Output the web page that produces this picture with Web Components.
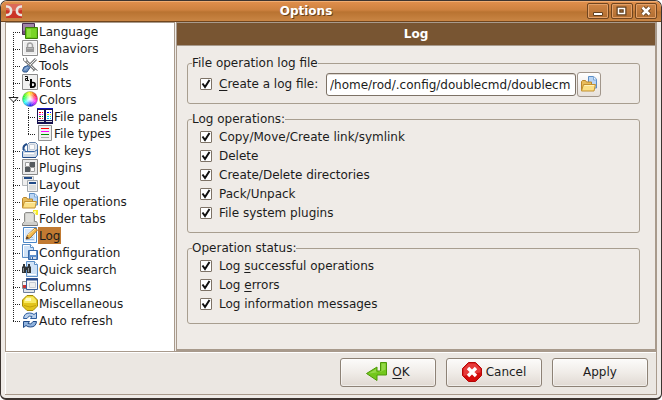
<!DOCTYPE html>
<html lang="en">
<head>
<meta charset="utf-8">
<title>Options</title>
<style>
  html { background: #fff; }
  body { margin: 0; font: 12px/15px "DejaVu Sans", sans-serif; color: #1c1c1c; }
  u { text-decoration: underline; text-underline-offset: 2px; text-decoration-skip-ink: none; }
</style>
</head>
<body>
<options-window caption="Options">
  <nav-tree slot="nav">
    <nav-item icon="language">Language</nav-item>
    <nav-item icon="behaviors">Behaviors</nav-item>
    <nav-item icon="tools">Tools</nav-item>
    <nav-item icon="fonts">Fonts</nav-item>
    <nav-item icon="colors" expanded>Colors</nav-item>
    <nav-item icon="panels" child>File panels</nav-item>
    <nav-item icon="types" child last>File types</nav-item>
    <nav-item icon="hotkeys">Hot keys</nav-item>
    <nav-item icon="plugins">Plugins</nav-item>
    <nav-item icon="layout">Layout</nav-item>
    <nav-item icon="folder">File operations</nav-item>
    <nav-item icon="tabs">Folder tabs</nav-item>
    <nav-item icon="log" selected>Log</nav-item>
    <nav-item icon="config">Configuration</nav-item>
    <nav-item icon="search">Quick search</nav-item>
    <nav-item icon="columns">Columns</nav-item>
    <nav-item icon="misc">Miscellaneous</nav-item>
    <nav-item icon="refresh">Auto refresh</nav-item>
  </nav-tree>
  <option-page heading="Log">
    <group-box legend="File operation log file">
      <file-row>
        <check-option><u>C</u>reate a log file:</check-option>
      </file-row>
    </group-box>
    <group-box legend="Log operations:" list>
      <check-option>Copy/Move/Create link/symlink</check-option>
      <check-option>Delete</check-option>
      <check-option>Create/Delete directories</check-option>
      <check-option>Pack/Unpack</check-option>
      <check-option>File system plugins</check-option>
    </group-box>
    <group-box legend="Operation status:" list>
      <check-option>Log <u>s</u>uccessful operations</check-option>
      <check-option>Log <u>e</u>rrors</check-option>
      <check-option>Log information messages</check-option>
    </group-box>
  </option-page>
  <push-button slot="actions" icon="ok"><span><u>O</u>K</span></push-button>
  <push-button slot="actions" icon="cancel">Cancel</push-button>
  <push-button slot="actions">Apply</push-button>
</options-window>

<script>
const wheel = () => {
  let out = "";
  for (let a = 0; a < 360; a += 15) {
    const p = d => { const r = (d * Math.PI) / 180; return `${(8 + 7.5 * Math.cos(r)).toFixed(2)} ${(8 - 7.5 * Math.sin(r)).toFixed(2)}`; };
    out += `<path d="M8 8L${p(a - 1)}A7.5 7.5 0 0 0 ${p(a + 16)}z" fill="hsl(${(a + 330) % 360} 100% 55%)"/>`;
  }
  return `<defs><radialGradient id="w"><stop offset="0" stop-color="#fff"/><stop offset=".9" stop-color="#fff" stop-opacity="0"/></radialGradient></defs>${out}<circle cx="8" cy="8" r="7.5" fill="url(#w)"/><circle cx="8" cy="8" r="7.5" fill="none" stroke="#8a8a8a" stroke-opacity=".6" stroke-width=".8"/>`;
};
const ICONS = {
  app: `<rect width="16" height="14" y="1" fill="#cb3325"/><path d="M0 1h16v6Q8 9 0 7z" fill="#dd6a58"/><g fill="none" stroke="#e9e4de" stroke-width="2.600"><path d="M0 3.500h1c5.500 0 5.500 8.500 0 8.500H0M16 3.500h-1c-5.500 0-5.500 8.500 0 8.500h1"/></g>`,
  language: `<path d="M.5.500h12v11H.5z" fill="#75527f" stroke="#4a2f54"/><path d="M1 1h11v4L1 8z" fill="#a184a8"/><path d="M3.500 4.500h12v11h-12z" fill="#6cc91c" stroke="#3c7c0a"/><path d="M5 6h4v8H5z" fill="#8fe03f"/><path d="M9 6h5v8H9z" fill="#79d426"/>`,
  behaviors: `<path d="M.5.500h15v15H.5z" fill="#ededed" stroke="#8d8d8d"/><path d="M1.500 1.500h13v13h-13z" fill="none" stroke="#fafafa"/><path d="M5.500 7V5.500a2.500 2.500 0 0 1 5 0V7" fill="none" stroke="#a2a2a2" stroke-width="1.500"/><path d="M4 7h8v5H4z" fill="#989898"/><path d="M5 8h6v1H5z" fill="#b4b4b4"/>`,
  tools: `<path d="M4 4l9 9" stroke="#7b7b7b" stroke-width="3"/><path d="M4 4l9 9" stroke="#e2e2e2" stroke-width="1"/><path d="M1.500 1v2.500l2 1.500h1.500V3L4 .5M11 14.500l1-1.500 2-1 1.500 2" fill="none" stroke="#808080"/><path d="M14 2L8 8" stroke="#808080" stroke-width="3"/><path d="M14 2L8 8" stroke="#f0f0f0"/><path d="M6 8.500L8 10.500 5 15H1.500L.500 13.500 2 10z" fill="#6a90c2" stroke="#2b5286"/><path d="M2.500 13l3-3" stroke="#a9c5e6"/>`,
  fonts: `<path d="M.5.500h15v15H.5z" fill="#f0f0f0" stroke="#8a8a8a"/><path d="M3 2.500h2.500V7M5.500 4.500H3.500v2h2M6 6.500h1" fill="none" stroke="#111"/><path d="M8 5h2v9H8z"/><circle cx="10.800" cy="10.800" r="2.300" fill="none" stroke="#000" stroke-width="1.700"/>`,
  colors: wheel(),
  panels: `<path d="M0 0h16v16H0z" fill="#17124f"/><path d="M1 2h6v10H1zM9 2h6v10H9z" fill="#fff"/><path d="M0 .5h16" stroke="#1212ba"/><path d="M2 4.500h2M5 4.500h1" stroke="#f00"/><path d="M2 6.500h2M5 6.500h1" stroke="#f0f"/><path d="M2 8.500h2M5 8.500h1" stroke="#080"/><path d="M2 10.500h2M5 10.500h1" stroke="#f33"/><path d="M10 4.500h2M13 4.500h1" stroke="#00f"/><path d="M10 6.500h2M13 6.500h1" stroke="#dd0"/><path d="M10 8.500h2M13 8.500h1" stroke="#0dd"/><path d="M10 10.500h2M13 10.500h1" stroke="#0cf"/><path d="M1 13.500h6M9 13.500h6" stroke="#ddd"/>`,
  types: `<path d="M1.500.500h13v15h-13z" fill="#f1f1f1" stroke="#929292"/><path d="M4 3.500h8" stroke="#f00"/><path d="M4 6.500h8" stroke="#f0f"/><path d="M4 9.500h8" stroke="#008c00"/><path d="M4 12.500h8" stroke="#aaa"/>`,
  hotkeys: `<path d="M5.500 2.500l2-2h6l2 2v7l-2 2h-8z" fill="#e4e8ed" stroke="#5f7fa8"/><path d="M7.500 2.500h5v5h-5z" fill="#fafafa" stroke="#c3ccd8"/><path d="M1.500 8V5.500Q2 3 5 2" fill="none" stroke="#204a87" stroke-width="2"/><path d="M.5 9.500L3 7.500v2h9.500l3-2v5.500l-2 2.500H.500z" fill="#d4dce6" stroke="#3465a4"/><path d="M2 11.500h10" stroke="#fff"/><path d="M1 15.500h13" stroke="#204a87"/>`,
  plugins: `<path d="M.5.500h15v15H.5z" fill="#ebebeb" stroke="#8a8a8a"/><path d="M3.500 3.500h4v4h-4zM8.500 8.500h4v4h-4z" fill="#fafafa" stroke="#9c9c9c"/><path d="M8 3h5v5H8zM3 8h5v5H3z" fill="#555a5e"/>`,
  layout: `<path d="M.5.500h11v9H.5z" fill="#eee" stroke="#b4b8bb"/><path d="M2 2h8" stroke="#204a87" stroke-width="2"/><path d="M5.500 4.500h10v11h-10z" fill="#f2f2f2" stroke="#a2a8ad"/><path d="M7 7h7" stroke="#204a87" stroke-width="2"/><path d="M7 9h7v5H7z" fill="#dcdedd"/>`,
  folder: `<path d="M7.500.500h5l3 2.500v9h-8z" fill="#b9d5f5" stroke="#5b8ec6"/><path d="M12.500.500V4h3" fill="#eef6ff" stroke="#7ea9d6"/><path d="M.5 14.500v-9l1-1h3l1 1.500h5v3" fill="#e9bd5b" stroke="#b9862b"/><path d="M2.500 8.500h12l-1.500 6.500H.500z" fill="#fbe086" stroke="#c2902f"/><path d="M3.500 9.500h9.500" stroke="#fff3bd"/>`,
  tabs: `<path d="M2.500 3.500L4 2.500h7l1.500 2v7h2l1 2v2H.500v-2l2-2z" fill="#cfcfcb" stroke="#8e8e8a"/><path d="M4 4h7v8H4z" fill="#dfdfdb"/><path d="M.5 15.500h15" stroke="#777"/><path d="M11 0h5v5h-2l-1-2-2-1z" fill="#f4e92c"/><path d="M12 1h2v2h-2z" fill="#fffb9a"/>`,
  log: `<path d="M1.500.500h13v15h-13z" fill="#d9e9fb" stroke="#4a86c7"/><path d="M2.500 1.500h11v13h-11z" fill="none" stroke="#fff"/><path d="M4 12.500h8M4 10.500h7" stroke="#99bfe8"/><path d="M4 12l1.500-4L13 1l2.500 2L8 11z" fill="#f3b94e" stroke="#ab7225"/><path d="M6 8l7-6" stroke="#ffe7a0"/><path d="M4 12l.8-2.500L7 11z" fill="#46342a"/>`,
  config: `<path d="M.5.500h8l3 3v10H.5z" fill="#cfe2f7" stroke="#5b8ec6"/><path d="M8.500.500v3h3" fill="#fff" stroke="#5b8ec6"/><path d="M1.500 12.500v-11h6" fill="none" stroke="#fff"/><path d="M6.500 6.500h9v9h-9z" fill="#5f91cc" stroke="#3465a4"/><path d="M8 7h6v4H8z" fill="#fff"/><path d="M9 13h5v2H9z" fill="#d3dde9"/><path d="M10 13h1v2h-1z" fill="#3465a4"/>`,
  search: `<path d="M4.500.500h8l3 3v12h-11z" fill="#cfe2f7" stroke="#5b8ec6"/><path d="M12.500.500v3h3" fill="#fff" stroke="#5b8ec6"/><path d="M6 13.500h8" stroke="#fff"/><path d="M1 3h2v2H1zM6 3h2v2H6zM0 6l1-1h2l1 1h1l1-1h2l1 1v6H5V9H4v3H0z" fill="#303437"/><path d="M1.500 7v4M6.500 7v4" stroke="#8c9194"/>`,
  columns: `<path d="M.5 3.500h5v7h-5z" fill="#f2f2f2" stroke="#8b8b8b"/><path d="M1 7h3v3H1z" fill="#cd3333"/><path d="M1.500 10.500h11v4h-11z" fill="#dfe3ea" stroke="#6c7f9d"/><path d="M4.500.500h11v11h-11z" fill="#f7f7f7" stroke="#3a5e9c"/><path d="M4 1.500h12" stroke="#26488a" stroke-width="2"/><path d="M7.500 4.500h6v5h-6z" fill="#eee" stroke="#c7ccd5"/>`,
  misc: `<path d="M5 .5h6L15.500 5v6L11 15.500H5L.500 11V5z" fill="#e3c51d" stroke="#a38a06"/><path d="M5 1.500h6l3 3.500v3H2V5z" fill="#f8ea62"/><path d="M4 3h5v3H3z" fill="#fffbc2"/><path d="M2 10.500q6 3 12 0" fill="none" stroke="#c3a10b"/>`,
  refresh: `<path d="M1.500 6.500Q2 1 7.500 1q3 0 4.500 1.500L14.500.500v6h-6L10 4.500Q7 2.500 5 6.500z" fill="#b9d0ec" stroke="#2d5c9e"/><path d="M14.500 9.500Q14 15 8.500 15q-3 0-4.500-1.500L1.500 15.500v-6h6L6 11.500q3 2 5-2z" fill="#8fb2dd" stroke="#204a87"/>`,
  ok: `<path d="M14.500.500h6v12.500h-9.500v5.500L.500 11.500 11 5v4h3.500z" fill="#73c71c" stroke="#4c9808"/><path d="M15.500 1.500h4v6q-6 3-17 4L10 7v3h5.500z" fill="#a0dd58" opacity=".75"/>`,
  cancel: `<path d="M6.500.500h7l6 6v7l-6 6h-7l-6-6v-7z" fill="#d40c0c" stroke="#b30707"/><path d="M6.500 1.500h7L18.500 6.500v4Q10 11 1.500 14V6.500z" fill="#e55" opacity=".65"/><path d="M6 6l8 8M14 6l-8 8" stroke="#fff" stroke-width="3.400"/>`
};
const icon = (name, w = 16, h = 16) => `<svg aria-hidden="true" width="${w}" height="${h}" viewBox="0 0 ${w} ${h}">${ICONS[name]}</svg>`;

class Base extends HTMLElement {
  connectedCallback() {
    if (this.shadowRoot) return;
    this.attachShadow({ mode: "open" }).innerHTML =
      `<style>*{box-sizing:border-box} svg{display:block;flex:none}</style>` + this.view();
  }
}

customElements.define("options-window", class extends Base {
  view() {
    return `<style>
      :host { display: flex; flex-direction: column; box-sizing: border-box; min-height: 100vh;
        border: 1px solid #3c3430; border-bottom-width: 2px; border-radius: 7px 7px 6px 6px;
        background: #efebe7; overflow: hidden; }
      header { display: flex; align-items: center; height: 21px; padding: 0 4px 0 5px;
        border-bottom: 1px solid #70451d;
        background: linear-gradient(#f0ad73 0 1px, #df8e4b 1px, #cd813f 45%, #b97331 55%, #c98544); }
      h1 { flex: 1; margin: 0; padding-left: 3px; text-align: center; font-size: 12px; line-height: 18px; color: #fff; text-shadow: 1px 1px #6b421c; }
      .controls { display: flex; gap: 2px; }
      .controls button { width: 22px; height: 16px; padding: 0; display: grid; place-items: center;
        border: 1px solid #70451f; border-radius: 2px; box-shadow: inset 0 0 0 1px #e2a068;
        background: linear-gradient(#cf8545, #b06d30); }
      main { display: flex; flex: 1; margin: 0 4px; border-bottom: 1px solid #a89a8c; }
      ::slotted([slot=nav]) { flex: 0 0 170px; }
      .page { display: flex; flex: 1; margin-left: 1px; min-width: 0; }
      footer { display: flex; justify-content: flex-end; gap: 10px; padding: 6px 8px 7px;
        margin: 0 4px 3px; border: 1px solid #a89a8c; border-width: 0 1px 1px 0;
        box-shadow: inset 1px 1px #fff; background: #ebe7e2; }
    </style>
    <header>${icon("app")}<h1>${this.getAttribute("caption")}</h1>
      <div class="controls">
        <button aria-label="Minimize"><svg width="12" height="12"><path d="M1.500 7.500h9v3h-9z" fill="#fff" stroke="#63401f"/></svg></button>
        <button aria-label="Maximize"><svg width="12" height="12"><path d="M2.500 3.500h6v5h-6z" fill="none" stroke="#63401f" stroke-width="4"/><path d="M2.500 3.500h6v5h-6z" fill="none" stroke="#fff" stroke-width="1.500"/></svg></button>
        <button aria-label="Close"><svg width="12" height="12"><path d="M2.500 2.500l7 7M9.500 2.500l-7 7" stroke="#63401f" stroke-width="4.500"/><path d="M2.500 2.500l7 7M9.500 2.500l-7 7" stroke="#fff" stroke-width="2.500"/></svg></button>
      </div></header>
    <main><slot name="nav"></slot><div class="page"><slot></slot></div></main>
    <footer><slot name="actions"></slot></footer>`;
  }
});

customElements.define("nav-tree", class extends Base {
  view() {
    return `<style>
      :host { display: block; box-sizing: border-box; background: #fff; border: 1px solid #a89a8c; border-bottom: 0; }
      div { background: repeating-linear-gradient(#222 0 1px, transparent 1px 2px) 7px 9px / 1px calc(100% - 17px) no-repeat; }
    </style><div role="tree" aria-label="Option pages"><slot></slot></div>`;
  }
});

customElements.define("nav-item", class extends Base {
  view() {
    this.setAttribute("role", "treeitem");
    const toggle = this.hasAttribute("expanded")
      ? `<svg width="11" height="7"><path d="M1 1.500h9L5.500 6z" fill="#fff" stroke="#222"/></svg>` : "";
    return `<style>
      :host { display: flex; align-items: flex-start; height: 17px; }
      :host([child]) { padding-left: 15px; }
      .guide { display: flex; align-items: center; align-self: stretch; width: 16px; padding-left: 2px;
        background: repeating-linear-gradient(90deg, #222 0 1px, transparent 1px 2px) 7px 9px / 7px 1px no-repeat; }
      :host([child]) .guide { background:
        repeating-linear-gradient(90deg, #222 0 1px, transparent 1px 2px) 7px 9px / 7px 1px no-repeat,
        repeating-linear-gradient(#222 0 1px, transparent 1px 2px) 7px 0 / 1px 100% no-repeat; }
      :host([last]) .guide { background-size: 7px 1px, 1px 9px; }
      .label { padding: 1px 1px 0; line-height: 16px; white-space: nowrap; }
      :host([selected]) .label { background: #c17a32; }
    </style><span class="guide">${toggle}</span>${icon(this.getAttribute("icon"))}<span class="label"><slot></slot></span>`;
  }
});

customElements.define("option-page", class extends Base {
  view() {
    return `<style>
      :host { display: block; flex: 1; min-width: 0; border: 1px solid #a89a8c; border-width: 1px 2px 2px 1px; background: #efebe7; }
      h2 { margin: 0; height: 23px; border-bottom: 1px solid #a89a8c; background: #785532; color: #fff;
        font-size: 12px; line-height: 22px; text-align: center; }
      .body { display: grid; gap: 8px; padding: 10px 15px 24px 10px; }
    </style><h2>${this.getAttribute("heading")}</h2><div class="body"><slot></slot></div>`;
  }
});

customElements.define("group-box", class extends Base {
  view() {
    return `<style>
      :host { display: block; min-width: 0; }
      fieldset { min-width: 0; margin: 0; padding: 1px 38px 6px 12px; border: 1px solid #a89e90; border-radius: 3px; }
      :host([list]) fieldset { padding: 1px 12px 9px; }
      legend { margin-left: -8px; padding: 0; height: 15px; }
    </style><fieldset><legend>${this.getAttribute("legend")}</legend><slot></slot></fieldset>`;
  }
});

customElements.define("check-option", class extends Base {
  view() {
    return `<style>
      :host { display: block; }
      label { display: flex; align-items: center; gap: 7px; height: 19px; white-space: nowrap; }
      .box { display: grid; padding-bottom: 1px; }
      .box > * { grid-area: 1 / 1; }
      input { appearance: none; width: 12px; height: 12px; margin: 0; background: #fff; border: 1px solid #7d7266; border-radius: 1px; }
      input:not(:checked) + svg { visibility: hidden; }
      svg { pointer-events: none; }
    </style><label><span class="box"><input type="checkbox" checked><svg width="12" height="12"><path d="M2.500 5.500l2.500 3.500 4.500-7" fill="none" stroke="#111" stroke-width="2"/></svg></span><span><slot></slot></span></label>`;
  }
});

customElements.define("file-row", class extends Base {
  view() {
    return `<style>
      :host { display: flex; align-items: center; }
      ::slotted(*) { flex: 0 0 126px; }
      input { flex: 1; min-width: 0; height: 23px; padding: 0 3px; border: 1px solid #7d7266; border-radius: 3px;
        background: #fff; color: inherit; font: inherit; box-shadow: inset 0 1px #ddd6cf; }
      button { width: 24px; height: 25px; margin-left: 1px; padding: 0 0 1px; display: grid; place-items: center;
        border: 1px solid #a1968b; border-radius: 3px; background: linear-gradient(#fff, #e6e0da); }
    </style><slot></slot><input aria-label="Log file path" value="/home/rod/.config/doublecmd/doublecm"><button aria-label="Browse">${icon("folder")}</button>`;
  }
});

customElements.define("push-button", class extends Base {
  view() {
    const name = this.getAttribute("icon");
    return `<style>
      :host { display: block; }
      button { display: flex; align-items: center; justify-content: center; gap: 4px; width: 96px; height: 29px; padding: 0;
        border: 1px solid #8d8276; border-radius: 3px; background: linear-gradient(#fcfbfa, #f0ece8 50%, #e0d9d2);
        box-shadow: inset 0 0 0 1px #ffffff80; color: inherit; font: inherit; }
      svg { margin-bottom: 1px; }
    </style><button>${name ? icon(name, name === "ok" ? 22 : 20, 20) : ""}<slot></slot></button>`;
  }
});
</script>
</body>
</html>
